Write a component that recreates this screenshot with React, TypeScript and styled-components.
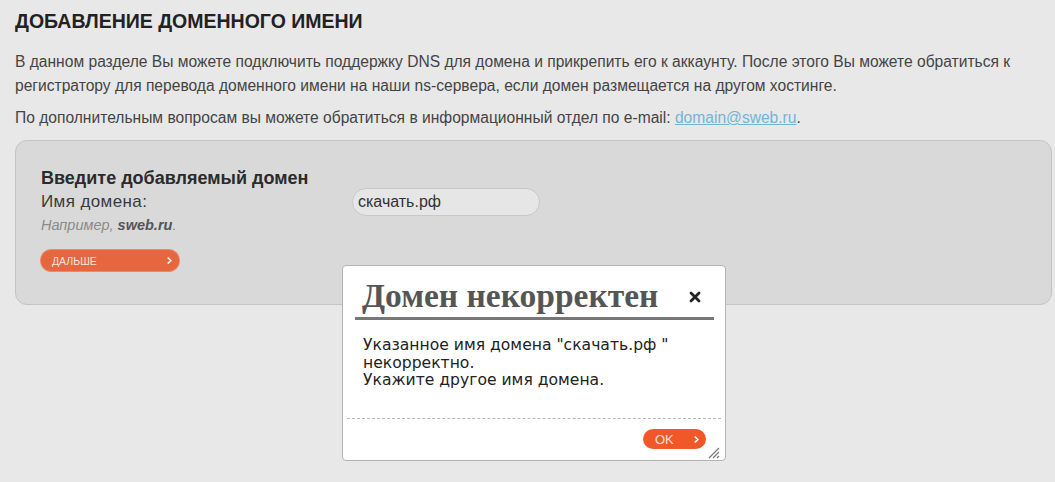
import React, { useState } from "react";
import styled, { createGlobalStyle } from "styled-components";

const GlobalStyle = createGlobalStyle`
  html, body {
    margin: 0;
    padding: 0;
    background: #e8e8e8;
  }
  body {
    font-family: "Liberation Sans", Arial, sans-serif;
    color: #333;
  }
`;

const Chevron = ({ size = 6 }: { size?: number }) => (
  <svg width={size} height={size + 2} viewBox="0 0 6 8">
    <path d="M1.5 1 L4.5 4 L1.5 7" stroke="#fff" strokeWidth="2" fill="none" strokeLinecap="round" />
  </svg>
);

const App = () => {
  const [domain, setDomain] = useState<string>("скачать.рф");
  const [open, setOpen] = useState<boolean>(true);

  return (
    <>
      <GlobalStyle />
      <Page>
        <Heading>Добавление доменного имени</Heading>
        <Paragraph>
          В данном разделе Вы можете подключить поддержку DNS для домена и прикрепить его к аккаунту. После
          этого Вы можете обратиться к регистратору для перевода доменного имени на наши ns-сервера, если домен
          размещается на другом хостинге.
        </Paragraph>
        <Paragraph>
          По дополнительным вопросам вы можете обратиться в информационный отдел по e-mail:{" "}
          <MailLink href="#">domain@sweb.ru</MailLink>.
        </Paragraph>

        <Panel>
          <PanelTitle>Введите добавляемый домен</PanelTitle>
          <FieldRow>
            <FieldLabel>
              <LabelText>Имя домена:</LabelText>
              <Hint>
                Например, <b>sweb.ru</b>.
              </Hint>
            </FieldLabel>
            <DomainInput value={domain} onChange={(e) => setDomain(e.target.value)} />
          </FieldRow>
          <NextButton>
            <span>Дальше</span>
            <Chevron size={5} />
          </NextButton>
        </Panel>

        {open && (
          <Dialog>
            <DialogHead>
              <DialogTitle>Домен некорректен</DialogTitle>
              <CloseButton onClick={() => setOpen(false)}>
                <svg width="12" height="12" viewBox="0 0 12 12">
                  <path d="M2 2 L10 10 M10 2 L2 10" stroke="#222" strokeWidth="2.8" strokeLinecap="round" />
                </svg>
              </CloseButton>
            </DialogHead>
            <DialogBody>
              Указанное имя домена "{domain} "
              <br />
              некорректно.
              <br />
              Укажите другое имя домена.
            </DialogBody>
            <DialogFooter>
              <OkButton onClick={() => setOpen(false)}>
                <span>OK</span>
                <Chevron size={5} />
              </OkButton>
              <Grip width="14" height="14" viewBox="0 0 14 14">
                <path d="M13 3 L3 13 M13 7 L7 13 M13 11 L11 13" stroke="#777" strokeWidth="1.2" />
              </Grip>
            </DialogFooter>
          </Dialog>
        )}
      </Page>
    </>
  );
};

export default App;

const Page = styled.div`
  position: relative;
  height: 482px;
  box-sizing: border-box;
  padding: 10px 3px 0 15px;
`;

const Heading = styled.h1`
  margin: 0 0 18px;
  font-size: 19.5px;
  font-weight: bold;
  text-transform: uppercase;
  color: #222;
  line-height: 22px;
`;

const Paragraph = styled.p`
  margin: 0 0 8px;
  font-size: 15.6px;
  line-height: 24px;
  color: #444;
  padding-right: 28px;
`;

const MailLink = styled.a`
  color: #72b4d8;
  text-decoration: underline;
`;

const Panel = styled.div`
  margin-top: 10px;
  height: 165px;
  box-sizing: border-box;
  padding: 26px 25px 0 25px;
  background: #d9d9d9;
  border: 1px solid #c4c4c4;
  border-radius: 12px;
`;

const PanelTitle = styled.div`
  font-size: 18px;
  font-weight: bold;
  color: #2b2b2b;
  line-height: 22px;
`;

const FieldRow = styled.div`
  display: flex;
  align-items: flex-start;
  margin-top: 3px;
`;

const FieldLabel = styled.div`
  width: 311px;
`;

const LabelText = styled.div`
  font-size: 17px;
  line-height: 20px;
  letter-spacing: 0.4px;
  color: #3a3a3a;
`;

const Hint = styled.div`
  margin-top: 4px;
  font-size: 14.5px;
  line-height: 18px;
  font-style: italic;
  color: #8a8a8a;

  b {
    color: #555;
  }
`;

const DomainInput = styled.input`
  margin-top: -4px;
  width: 188px;
  height: 28px;
  box-sizing: border-box;
  padding: 0 0 0 5px;
  border: 1px solid #c8c8c8;
  border-radius: 14px;
  background: #e6e6e6;
  font-family: "Liberation Sans", Arial, sans-serif;
  font-size: 16px;
  color: #333;
  outline: none;
`;

const PillButton = styled.button`
  display: flex;
  align-items: center;
  justify-content: space-between;
  box-sizing: border-box;
  border: none;
  border-radius: 11px;
  color: #fff;
  font-family: "Liberation Sans", Arial, sans-serif;
  cursor: pointer;
`;

const NextButton = styled(PillButton)`
  margin-top: 16px;
  width: 138px;
  height: 21px;
  padding: 0 7px 0 11px;
  background: #e5663f;
  box-shadow: 0 0 0 1px #e98a66;
  font-size: 10.5px;
  text-transform: uppercase;
  color: #fbe3da;
`;

const Dialog = styled.div`
  position: absolute;
  left: 342px;
  top: 265px;
  width: 384px;
  height: 196px;
  box-sizing: border-box;
  background: #fff;
  border: 1px solid #b3b3b3;
  border-radius: 4px;
  display: flex;
  flex-direction: column;
  padding: 0 4px 0 4px;
`;

const DialogHead = styled.div`
  display: flex;
  align-items: center;
  justify-content: space-between;
  margin: 11px 7px 0 8px;
  padding: 0 13px 2px 7px;
  border-bottom: 3px solid #777;
`;

const DialogTitle = styled.div`
  font-family: "Liberation Serif", "Times New Roman", serif;
  font-weight: bold;
  font-size: 33.5px;
  line-height: 38px;
  color: #555;
`;

const CloseButton = styled.button`
  display: flex;
  padding: 0;
  border: none;
  background: none;
  cursor: pointer;
  margin-top: 2px;
`;

const DialogBody = styled.div`
  flex: 1;
  padding: 17px 0 0 16px;
  font-family: "DejaVu Sans", Verdana, sans-serif;
  font-size: 15.6px;
  line-height: 17.5px;
  color: #222;
  border-bottom: 1px dashed #b8b8b8;
`;

const DialogFooter = styled.div`
  position: relative;
  height: 41px;
  display: flex;
  align-items: flex-start;
  justify-content: flex-end;
  padding: 10px 15px 0 0;
  box-sizing: border-box;
`;

const OkButton = styled(PillButton)`
  width: 63px;
  height: 20px;
  padding: 0 7px 0 12px;
  border-radius: 10px;
  background: #f0582a;
  font-size: 13px;
  color: #fde0d5;
`;

const Grip = styled.svg`
  position: absolute;
  right: 1px;
  bottom: 1px;
`;
